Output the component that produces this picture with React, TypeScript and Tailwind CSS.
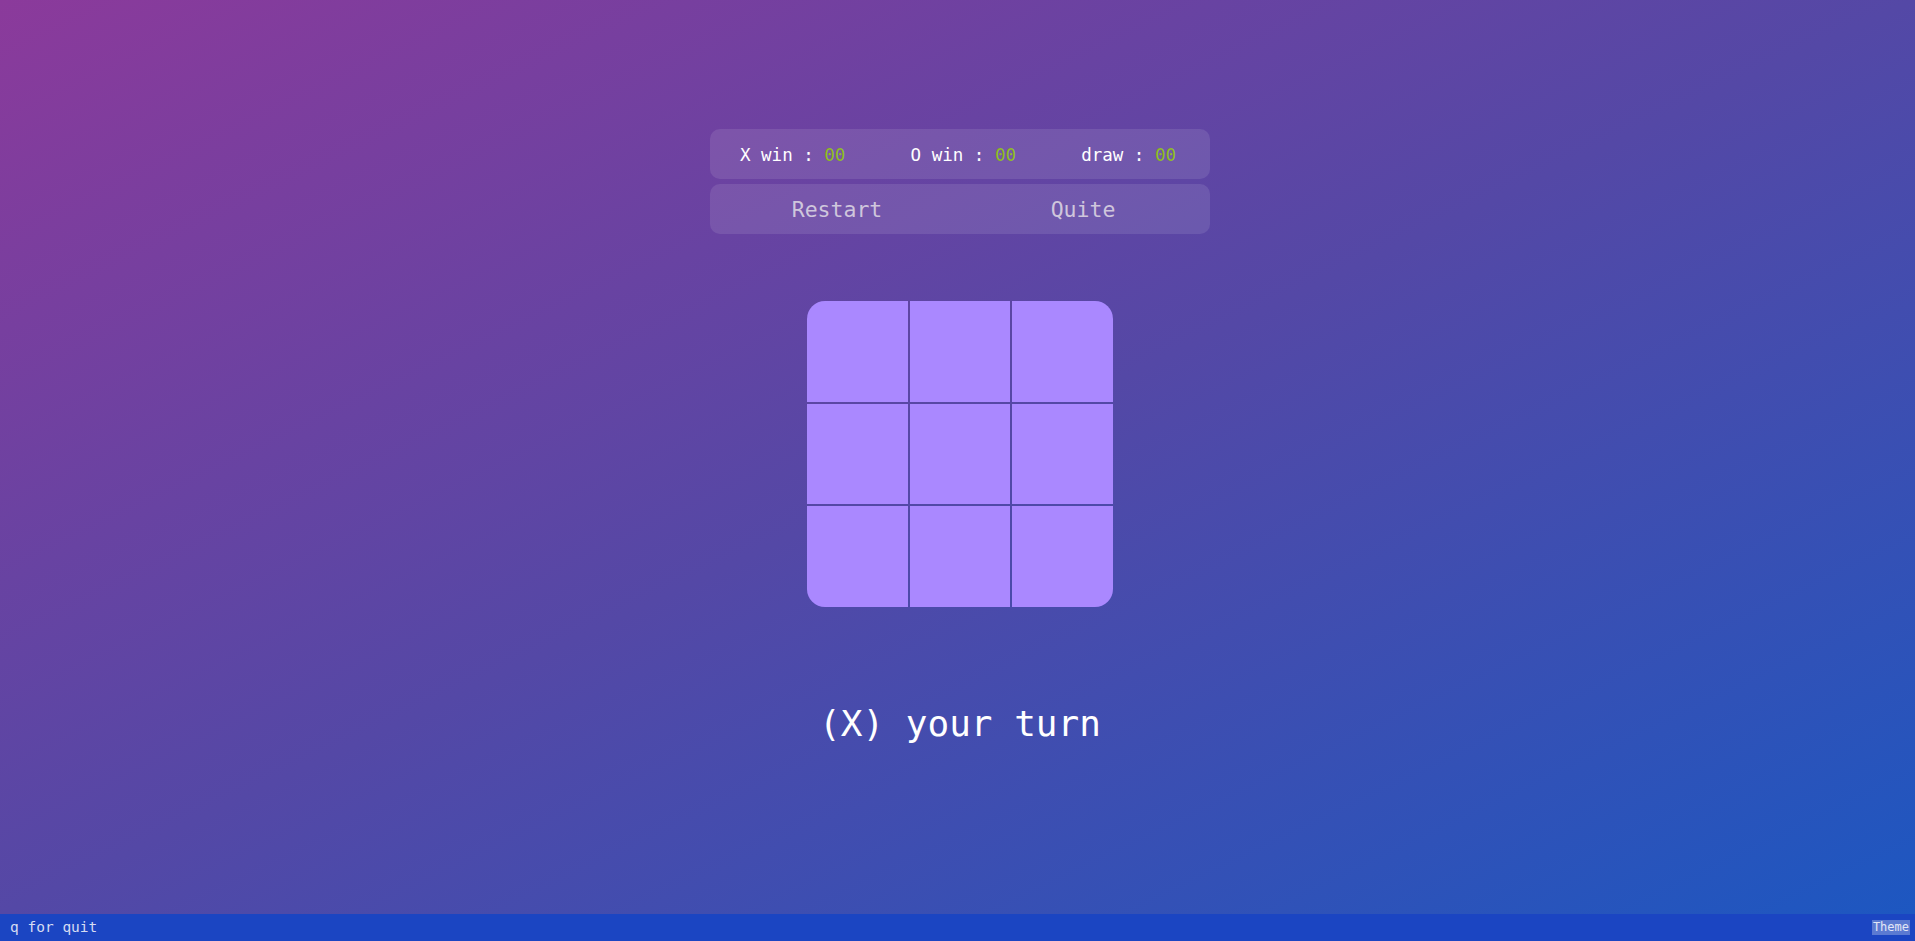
const mono = { fontFamily: '"DejaVu Sans Mono", "Liberation Mono", monospace' };

const ScoreItem = ({ label, value }: { label: string; value: string }) => (
  <span className="whitespace-pre text-white">
    {label} : <span className="text-[#8fbf1f]">{value}</span>
  </span>
);

const Cell = ({ className }: { className: string }) => (
  <button type="button" className={`h-full w-full bg-[#aa88ff] ${className}`} />
);

export default function App() {
  const cells = [
    'rounded-tl-[18px]',
    '',
    'rounded-tr-[18px]',
    '',
    '',
    '',
    'rounded-bl-[18px]',
    '',
    'rounded-br-[18px]',
  ];

  return (
    <div className="flex h-[941px] w-full flex-col" style={mono}>
      <main className="flex h-[914px] flex-col items-center bg-[linear-gradient(to_bottom_right,#8b3a9b,#5448a6_50%,#1d57c1)] pl-[5px] pt-[129px]">
        <div className="flex h-[50px] w-[500px] items-center rounded-[10px] bg-white/10 pb-[1px] pl-[30px] pr-[34px] pt-[3px] text-[17.5px]">
          <div className="flex-1">
            <ScoreItem label="X win" value="00" />
          </div>
          <div className="flex-1 pl-[10px]">
            <ScoreItem label="O win" value="00" />
          </div>
          <div className="pl-[10px]">
            <ScoreItem label="draw" value="00" />
          </div>
        </div>
        <div className="mt-[5px] flex h-[50px] w-[500px] items-center rounded-[10px] bg-white/10 px-[4px] pt-[2px] text-[21.5px] text-[#cfc6dc]">
          <button type="button" className="flex-1 text-center">Restart</button>
          <button type="button" className="flex-1 text-center">Quite</button>
        </div>
        <div className="mt-[67px] grid h-[306px] w-[306px] grid-cols-3 grid-rows-3 gap-[2px]">
          {cells.map((c, i) => (
            <Cell key={i} className={c} />
          ))}
        </div>
        <p className="mt-[95px] text-[36px] leading-[44px] text-white">(X) your turn</p>
      </main>
      <footer className="flex h-[27px] items-center justify-between bg-[#1b45c2] pl-[10px] pr-[5px] text-[14.5px] text-[#d6dcf2]">
        <span>q for quit</span>
        <button type="button" className="bg-[#5b7ad2] px-[1px] text-[12px] leading-[15px] text-[#e2e6f6]">
          Theme
        </button>
      </footer>
    </div>
  );
}
